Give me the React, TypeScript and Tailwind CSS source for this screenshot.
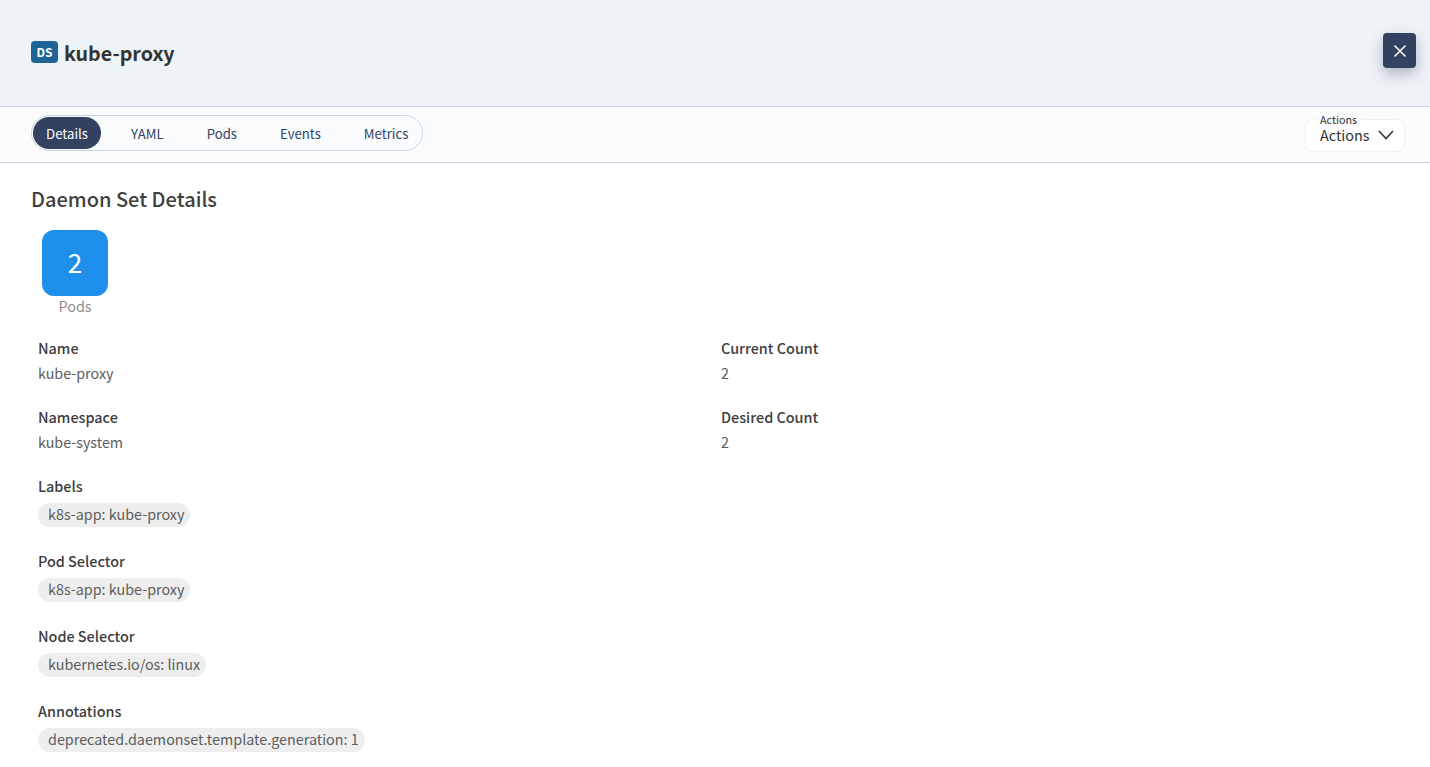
import React from 'react';

const Field: React.FC<{ label: string; value: string }> = ({ label, value }) => (
  <div className="h-[69px]">
    <div className="text-[14.4px] leading-[22px] font-medium text-[#3d3d3d] h-[25px]">{label}</div>
    <div className="text-[14.3px] leading-[22px] text-[#5c5c5c]">{value}</div>
  </div>
);

const Chips: React.FC<{ label: string; value: string }> = ({ label, value }) => (
  <div className="h-[75px]">
    <div className="text-[14.4px] leading-[22px] font-medium text-[#3d3d3d] h-[28px]">{label}</div>
    <span className="flex w-fit items-center h-6 pb-[2px] rounded-xl bg-[#eeeeee] pl-[10px] pr-[6px] text-[14.35px] text-[#5c5c5c]">{value}</span>
  </div>
);

export default function App() {
  return (
    <div className="w-[1430px] h-[767px] overflow-hidden bg-white font-['Noto_Sans_CJK_SC',sans-serif]">
      <div className="h-[107px] bg-[#eef3f7] border-b border-[#cbd5e1] flex items-center justify-between pl-[31px] pr-[14px]">
        <div className="flex items-center gap-[6px]">
          <span className="w-[27px] h-[22px] mb-[1px] rounded bg-[#1e6496] text-white text-[12px] font-bold flex items-center justify-center">DS</span>
          <h1 className="text-[19.7px] font-bold text-[#333333]">kube-proxy</h1>
        </div>
        <button className="w-[33px] h-[35px] mb-[5px] rounded bg-[#334260] text-white flex items-center justify-center shadow-[0_6px_14px_rgba(51,66,96,0.35)]">
          <svg className="w-[14px] h-[14px]" viewBox="0 0 14 14" fill="none" stroke="currentColor" strokeWidth="1.5"><path d="M1.5 1.5l11 11M12.5 1.5l-11 11" /></svg>
        </button>
      </div>

      <div className="h-[56px] bg-[#f9fbfd] border-b border-[#cbd5e1] flex items-center justify-between pl-[31px] pr-[25px]">
        <div className="flex items-center h-9 mb-[3px] w-[392px] rounded-full border border-[#cbd5e1] pl-[1px] text-[13.2px] text-[#334260]">
          <span className="w-[68px] h-[32px] pt-[1px] rounded-full bg-[#334260] text-white flex items-center justify-center">Details</span>
          <span className="ml-[30px] pt-[1px]">YAML</span>
          <span className="ml-[43px] pt-[1px]">Pods</span>
          <span className="ml-[43px] pt-[1px]">Events</span>
          <span className="ml-[43px] pt-[1px]">Metrics</span>
        </div>
        <div className="relative w-[100px] h-[33px] mt-[1px] rounded-lg border border-[#eef0f4] bg-white flex items-center pl-[14px] text-[#333333]">
          <span className="absolute left-[10px] -top-[8px] px-[4px] bg-[#f9fbfd] text-[10.8px] leading-[14px]">Actions</span>
          <span className="text-[14.4px] leading-[20px]">Actions</span>
          <svg className="ml-2 w-[16px] h-[10px]" viewBox="0 0 16 10" fill="none" stroke="currentColor" strokeWidth="1.6"><path d="M1 1l7 7.5L15 1" /></svg>
        </div>
      </div>

      <div className="pl-[31px] pt-[21px]">
        <h2 className="text-[20px] leading-[30px] font-medium text-[#404040]">Daemon Set Details</h2>
        <div className="ml-[11px] mt-[16px] w-[66px] flex flex-col items-center">
          <div className="w-[66px] h-[66px] rounded-xl bg-[#1e90eb] text-white text-[26px] leading-[64px] text-center">2</div>
          <div className="text-[14.4px] leading-[20px] text-[#8c8c8c]">Pods</div>
        </div>
        <div className="grid grid-cols-2 w-[1373px] pl-[7px] mt-[21px]">
          <Field label="Name" value="kube-proxy" />
          <Field label="Current Count" value="2" />
          <Field label="Namespace" value="kube-system" />
          <Field label="Desired Count" value="2" />
        </div>
        <div className="pl-[7px]">
          <Chips label="Labels" value="k8s-app: kube-proxy" />
          <Chips label="Pod Selector" value="k8s-app: kube-proxy" />
          <Chips label="Node Selector" value="kubernetes.io/os: linux" />
          <Chips label="Annotations" value="deprecated.daemonset.template.generation: 1" />
        </div>
      </div>
    </div>
  );
}
